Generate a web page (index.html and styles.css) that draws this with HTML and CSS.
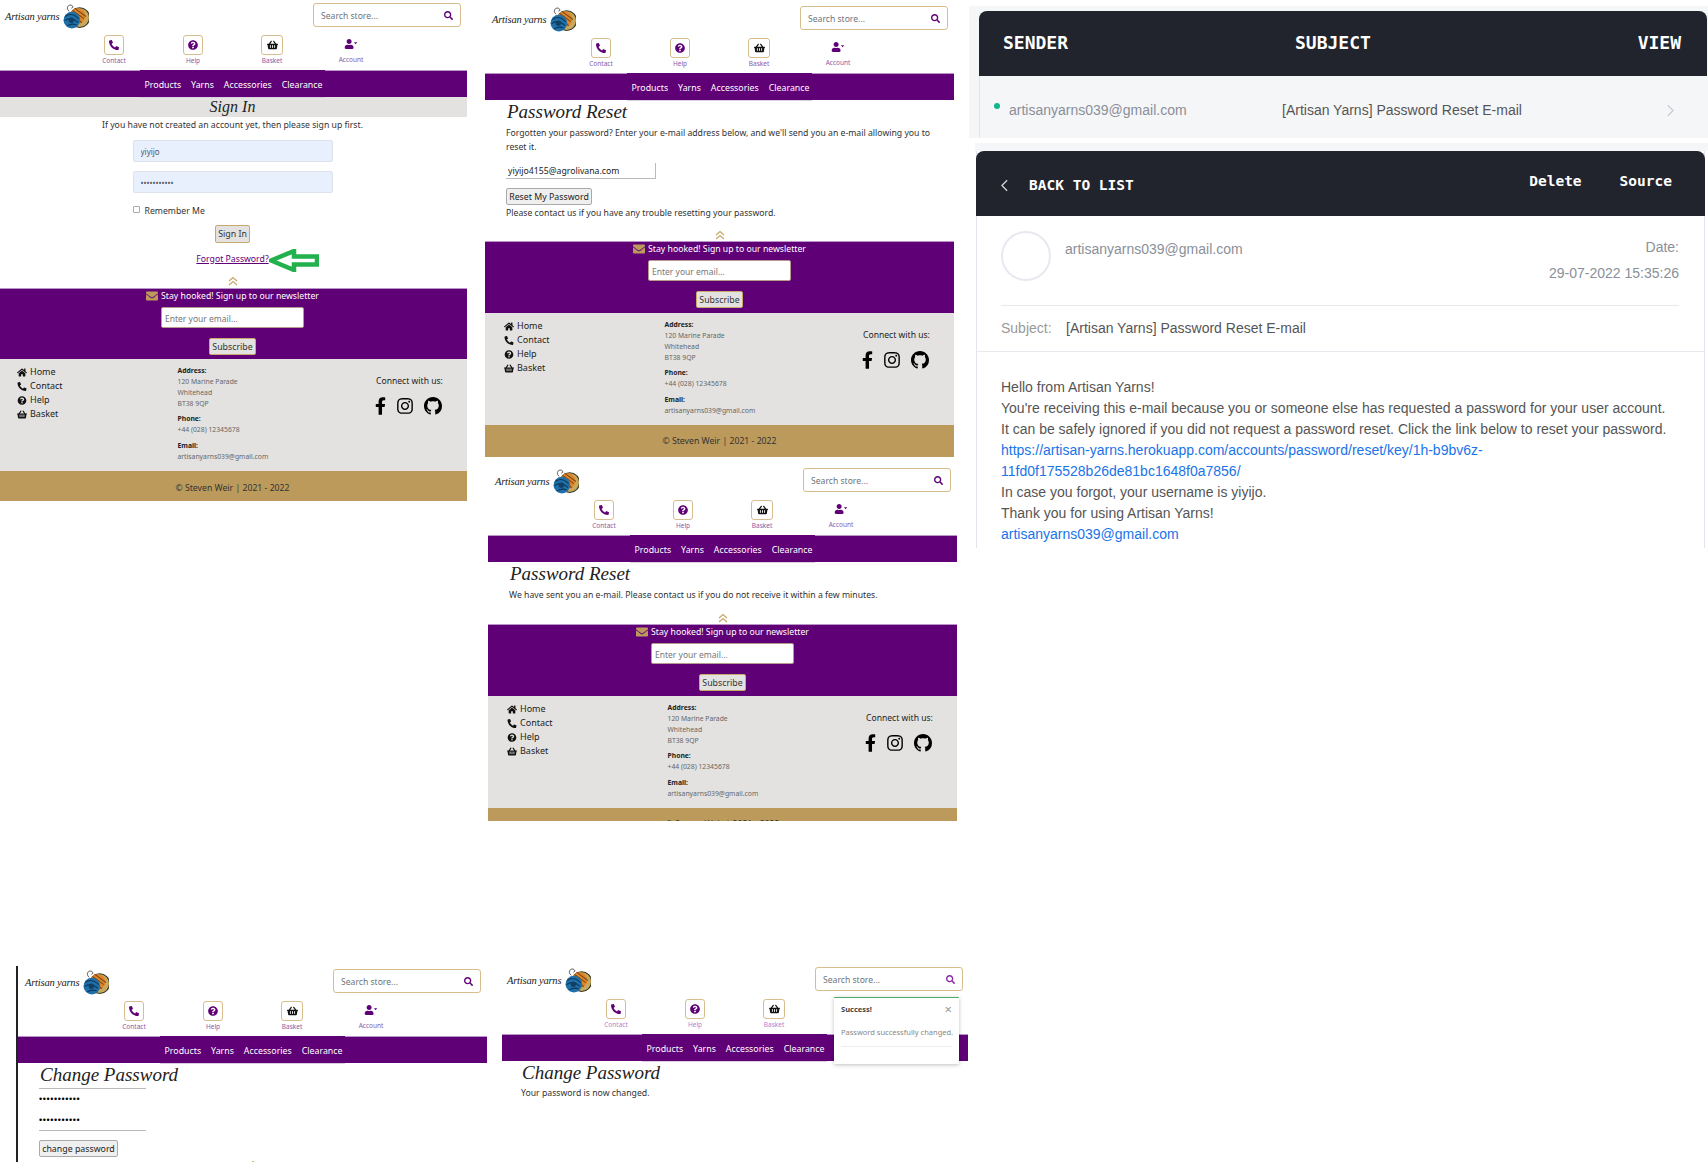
FILE: index.html
```html
<!DOCTYPE html>
<html lang="en">
<head>
    <meta charset="UTF-8">
    <title>Artisan Yarns - password reset flow</title>
    <link rel="stylesheet" href="styles.css">
</head>
<body>
    <svg class="sprites" width="0" height="0">
        <symbol id="i-phone" viewBox="0 0 512 512"><path d="M497.39 361.8l-112-48a24 24 0 0 0-28 6.9l-49.6 60.6A370.66 370.66 0 0 1 130.6 204.11l60.6-49.6a23.94 23.94 0 0 0 6.9-28l-48-112A24.16 24.16 0 0 0 122.6.61l-104 24A24 24 0 0 0 0 48c0 256.5 207.9 464 464 464a24 24 0 0 0 23.4-18.6l24-104a24.29 24.29 0 0 0-14.01-27.6z"/></symbol>
        <symbol id="i-help" viewBox="0 0 512 512"><path d="M504 256c0 136.997-111.043 248-248 248S8 392.997 8 256C8 119.083 119.043 8 256 8s248 111.083 248 248zM262.655 90c-54.497 0-89.255 22.957-116.549 63.758-3.536 5.286-2.353 12.415 2.715 16.258l34.699 26.31c5.205 3.947 12.621 3.008 16.665-2.122 17.864-22.658 30.113-35.797 57.303-35.797 20.429 0 45.698 13.148 45.698 32.958 0 14.976-12.363 22.667-32.534 33.976C247.128 238.528 216 254.941 216 296v4c0 6.627 5.373 12 12 12h56c6.627 0 12-5.373 12-12v-1.333c0-28.462 83.186-29.647 83.186-106.667 0-58.002-60.165-102-116.531-102zM256 338c-25.365 0-46 20.635-46 46 0 25.364 20.635 46 46 46s46-20.636 46-46c0-25.365-20.635-46-46-46z"/></symbol>
        <symbol id="i-basket" viewBox="0 0 576 512"><path d="M576 216v16c0 13.255-10.745 24-24 24h-8l-26.113 182.788C514.509 462.435 494.257 480 470.37 480H105.63c-23.887 0-44.139-17.565-47.518-41.212L32 256h-8c-13.255 0-24-10.745-24-24v-16c0-13.255 10.745-24 24-24h67.341l106.78-146.821c10.395-14.292 30.407-17.453 44.701-7.058 14.293 10.395 17.453 30.408 7.058 44.701L170.477 192h235.046L326.12 82.821c-10.395-14.292-7.234-34.306 7.059-44.701 14.291-10.395 34.306-7.235 44.701 7.058L484.659 192H552c13.255 0 24 10.745 24 24zM312 392V280c0-13.255-10.745-24-24-24s-24 10.745-24 24v112c0 13.255 10.745 24 24 24s24-10.745 24-24zm112 0V280c0-13.255-10.745-24-24-24s-24 10.745-24 24v112c0 13.255 10.745 24 24 24s24-10.745 24-24zm-224 0V280c0-13.255-10.745-24-24-24s-24 10.745-24 24v112c0 13.255 10.745 24 24 24s24-10.745 24-24z"/></symbol>
        <symbol id="i-user" viewBox="0 0 640 512"><path d="M224 256c70.7 0 128-57.3 128-128S294.7 0 224 0 96 57.3 96 128s57.3 128 128 128zm89.6 32h-16.7c-22.2 10.2-46.9 16-72.9 16s-50.6-5.8-72.9-16h-16.7C60.2 288 0 348.2 0 422.4V464c0 26.5 21.5 48 48 48h352c26.5 0 48-21.5 48-48v-41.6c0-74.2-60.2-134.4-134.4-134.4z"/><path d="M470 170h170l-85 100z"/></symbol>
        <symbol id="i-search" viewBox="0 0 512 512"><path d="M505 442.7L405.3 343c-4.5-4.5-10.6-7-17-7H372c27.6-35.3 44-79.7 44-128C416 93.1 322.9 0 208 0S0 93.1 0 208s93.1 208 208 208c48.3 0 92.7-16.4 128-44v16.3c0 6.4 2.5 12.5 7 17l99.7 99.7c9.4 9.4 24.6 9.4 33.9 0l28.3-28.3c9.4-9.4 9.4-24.6.1-34zM208 336c-70.7 0-128-57.2-128-128 0-70.7 57.2-128 128-128 70.7 0 128 57.2 128 128 0 70.7-57.2 128-128 128z"/></symbol>
        <symbol id="i-mail" viewBox="0 0 512 512"><path d="M502.3 190.8c3.9-3.1 9.7-.2 9.7 4.7V400c0 26.5-21.5 48-48 48H48c-26.5 0-48-21.5-48-48V195.6c0-5 5.7-7.8 9.7-4.7 22.4 17.4 52.1 39.5 154.1 113.6 21.1 15.4 56.7 47.8 92.2 47.6 35.7.3 72-32.8 92.3-47.6 102-74.1 131.6-96.3 154-113.7zM256 320c23.2.4 56.6-29.2 73.4-41.4 132.7-96.3 142.8-104.7 173.4-128.7 5.8-4.5 9.2-11.5 9.2-18.9v-19c0-26.5-21.5-48-48-48H48C21.5 64 0 85.5 0 112v19c0 7.4 3.4 14.3 9.2 18.9 30.6 23.9 40.7 32.4 173.4 128.7 16.8 12.2 50.2 41.8 73.4 41.4z"/></symbol>
        <symbol id="i-home" viewBox="0 0 576 512"><path d="M280.37 148.26L96 300.11V464a16 16 0 0 0 16 16l112.06-.29a16 16 0 0 0 15.92-16V368a16 16 0 0 1 16-16h64a16 16 0 0 1 16 16v95.64a16 16 0 0 0 16 16.05L464 480a16 16 0 0 0 16-16V300L295.67 148.26a12.19 12.19 0 0 0-15.3 0zM571.6 251.47L488 182.56V44.05a12 12 0 0 0-12-12h-56a12 12 0 0 0-12 12v72.61L318.47 43a48 48 0 0 0-61 0L4.34 251.47a12 12 0 0 0-1.6 16.9l25.5 31A12 12 0 0 0 45.15 301l235.22-193.74a12.19 12.19 0 0 1 15.3 0L530.9 301a12 12 0 0 0 16.9-1.6l25.5-31a12 12 0 0 0-1.7-16.93z"/></symbol>
        <symbol id="i-fb" viewBox="0 0 320 512"><path d="M279.14 288l14.22-92.66h-88.91v-60.13c0-25.35 12.42-50.06 52.24-50.06h40.42V6.26S260.43 0 225.36 0c-73.22 0-121.08 44.38-121.08 124.72v70.62H22.89V288h81.39v224h100.17V288z"/></symbol>
        <symbol id="i-insta" viewBox="0 0 448 512"><path d="M224.1 141c-63.6 0-114.9 51.3-114.9 114.9s51.3 114.9 114.9 114.9S339 319.5 339 255.9 287.7 141 224.1 141zm0 189.6c-41.1 0-74.7-33.5-74.7-74.7s33.5-74.7 74.7-74.7 74.7 33.5 74.7 74.7-33.6 74.7-74.7 74.7zm146.4-194.3c0 14.9-12 26.8-26.8 26.8-14.9 0-26.8-12-26.8-26.8s12-26.8 26.8-26.8 26.8 12 26.8 26.8zm76.1 27.2c-1.7-35.9-9.9-67.7-36.2-93.9-26.2-26.2-58-34.4-93.9-36.2-37-2.1-147.9-2.1-184.9 0-35.8 1.7-67.6 9.9-93.9 36.1s-34.4 58-36.2 93.9c-2.1 37-2.1 147.9 0 184.9 1.7 35.9 9.9 67.7 36.2 93.9s58 34.4 93.9 36.2c37 2.1 147.9 2.1 184.9 0 35.9-1.7 67.7-9.9 93.9-36.2 26.2-26.2 34.4-58 36.2-93.9 2.1-37 2.1-147.8 0-184.8zM398.8 388c-7.8 19.6-22.9 34.7-42.6 42.6-29.5 11.7-99.5 9-132.1 9s-102.7 2.6-132.1-9c-19.6-7.8-34.7-22.9-42.6-42.6-11.7-29.5-9-99.5-9-132.1s-2.6-102.7 9-132.1c7.8-19.6 22.9-34.7 42.6-42.6 29.5-11.7 99.5-9 132.1-9s102.7-2.6 132.1 9c19.6 7.8 34.7 22.9 42.6 42.6 11.7 29.5 9 99.5 9 132.1s2.7 102.7-9 132.1z"/></symbol>
        <symbol id="i-github" viewBox="0 0 16 16"><path d="M8 0C3.58 0 0 3.58 0 8c0 3.54 2.29 6.53 5.47 7.59.4.07.55-.17.55-.38 0-.19-.01-.82-.01-1.49-2.01.37-2.53-.49-2.69-.94-.09-.23-.48-.94-.82-1.13-.28-.15-.68-.52-.01-.53.63-.01 1.08.58 1.23.82.72 1.21 1.87.87 2.33.66.07-.52.28-.87.51-1.07-1.78-.2-3.64-.89-3.64-3.95 0-.87.31-1.59.82-2.15-.08-.2-.36-1.02.08-2.12 0 0 .67-.21 2.2.82.64-.18 1.32-.27 2-.27.68 0 1.36.09 2 .27 1.53-1.04 2.2-.82 2.2-.82.44 1.1.16 1.92.08 2.12.51.56.82 1.27.82 2.15 0 3.07-1.87 3.75-3.65 3.95.29.25.54.73.54 1.48 0 1.07-.01 1.93-.01 2.2 0 .21.15.46.55.38A8.013 8.013 0 0016 8c0-4.42-3.58-8-8-8z"/></symbol>
        <symbol id="i-yarn" viewBox="0 0 26 24">
            <path d="M7 7C4 5 5 1 8 1s3 3 1 3" fill="none" stroke="#333" stroke-width=".8"/>
            <circle cx="17" cy="13" r="9.5" fill="#c9a85c" stroke="#3a3a2a"/>
            <circle cx="15" cy="11.5" r="7.5" fill="#e0842a"/>
            <path d="M10 6l11 8M12 4l11 8M9 10l10 8" stroke="#7a4a14"/>
            <circle cx="9.5" cy="15.5" r="8" fill="#1f6fa8"/>
            <path d="M3 12c4-3 9-2 13 2M2.500 16c4-3 9-2 13 2M5 21c3-2 6-2 9-1" fill="none" stroke="#0c3a5c"/>
            <circle cx="9" cy="15.5" r="2.500" fill="#123f63"/>
        </symbol>
        <symbol id="i-top" viewBox="0 0 10 10"><path d="M1 5l4-3.500L9 5M1 9l4-3.500L9 9" fill="none" stroke="#c9a86a" stroke-width="1.300"/></symbol>
    </svg>

    <section class="shot shot-signin">
        <div class="page">
            <header class="site-top">
                <a class="logo"><span class="logo-text">Artisan yarns</span><svg class="logo-ball"><use href="#i-yarn"/></svg></a>
                <div class="search"><span class="search-text">Search store...</span><span class="search-btn"><svg class="search-icon"><use href="#i-search"/></svg></span></div>
            </header>
            <div class="icon-row">
                <div class="icon-item"><span class="icon-box"><svg class="icon-glyph"><use href="#i-phone"/></svg></span><span class="icon-label">Contact</span></div>
                <div class="icon-item"><span class="icon-box"><svg class="icon-glyph"><use href="#i-help"/></svg></span><span class="icon-label">Help</span></div>
                <div class="icon-item"><span class="icon-box box-wide"><svg class="icon-glyph glyph-basket"><use href="#i-basket"/></svg></span><span class="icon-label">Basket</span></div>
                <div class="icon-item item-account"><svg class="account-glyph"><use href="#i-user"/></svg><span class="icon-label">Account</span></div>
            </div>
            <nav class="main-nav"><div class="nav-links"><a>Products</a><a>Yarns</a><a>Accessories</a><a>Clearance</a></div></nav>

            <main>
                <h1 class="page-title band-title">Sign In</h1>
                <p class="signin-note">If you have not created an account yet, then please sign up first.</p>
                <form class="signin-form">
                    <input class="filled-input" type="text" value="yiyijo">
                    <input class="filled-input" type="password" value="yiyijo41551">
                    <label class="remember"><input type="checkbox"> Remember Me</label>
                    <div class="signin-actions">
                        <button class="tan-btn" type="button">Sign In</button>
                        <div class="forgot-wrap">
                            <a class="forgot-link">Forgot Password?</a>
                            <svg class="green-arrow" viewBox="0 0 50 23"><path d="M2 11.500L25 2v5.500h23v8H25V21z" fill="#fff" stroke="#22b14c" stroke-width="4.500"/></svg>
                        </div>
                    </div>
                </form>
                <svg class="to-top"><use href="#i-top"/></svg>
            </main>

            <footer class="site-foot">
                <div class="news">
                    <div class="news-title"><svg class="news-icon"><use href="#i-mail"/></svg>Stay hooked! Sign up to our newsletter</div>
                    <input class="news-input" type="text" placeholder="Enter your email...">
                    <button class="tan-btn news-btn" type="button">Subscribe</button>
                </div>
                <div class="info">
                    <ul class="foot-links">
                        <li><svg class="foot-icon"><use href="#i-home"/></svg>Home</li>
                        <li><svg class="foot-icon"><use href="#i-phone"/></svg>Contact</li>
                        <li><svg class="foot-icon"><use href="#i-help"/></svg>Help</li>
                        <li><svg class="foot-icon"><use href="#i-basket"/></svg>Basket</li>
                    </ul>
                    <div class="contact">
                        <strong>Address:</strong><span>120 Marine Parade</span><span>Whitehead</span><span>BT38 9QP</span>
                        <strong>Phone:</strong><span>+44 (028) 12345678</span>
                        <strong>Email:</strong><span>artisanyarns039@gmail.com</span>
                    </div>
                    <div class="social">
                        <div class="social-title">Connect with us:</div>
                        <div class="social-icons"><svg class="soc-fb"><use href="#i-fb"/></svg><svg class="soc-insta"><use href="#i-insta"/></svg><svg class="soc-gh"><use href="#i-github"/></svg></div>
                    </div>
                </div>
                <div class="copy">© Steven Weir | 2021 - 2022</div>
            </footer>
        </div>
    </section>

    <section class="shot shot-reset">
        <div class="page">
            <header class="site-top">
                <a class="logo"><span class="logo-text">Artisan yarns</span><svg class="logo-ball"><use href="#i-yarn"/></svg></a>
                <div class="search"><span class="search-text">Search store...</span><span class="search-btn"><svg class="search-icon"><use href="#i-search"/></svg></span></div>
            </header>
            <div class="icon-row">
                <div class="icon-item"><span class="icon-box"><svg class="icon-glyph"><use href="#i-phone"/></svg></span><span class="icon-label">Contact</span></div>
                <div class="icon-item"><span class="icon-box"><svg class="icon-glyph"><use href="#i-help"/></svg></span><span class="icon-label">Help</span></div>
                <div class="icon-item"><span class="icon-box box-wide"><svg class="icon-glyph glyph-basket"><use href="#i-basket"/></svg></span><span class="icon-label">Basket</span></div>
                <div class="icon-item item-account"><svg class="account-glyph"><use href="#i-user"/></svg><span class="icon-label">Account</span></div>
            </div>
            <nav class="main-nav"><div class="nav-links"><a>Products</a><a>Yarns</a><a>Accessories</a><a>Clearance</a></div></nav>

            <main class="plain-main main-reset">
                <h1 class="page-title">Password Reset</h1>
                <p class="plain-text reset-intro">Forgotten your password? Enter your e-mail address below, and we'll send you an e-mail allowing you to reset it.</p>
                <input class="reset-input" type="text" value="yiyijo4155@agrolivana.com">
                <button class="grey-btn reset-btn" type="button">Reset My Password</button>
                <p class="plain-text reset-help">Please contact us if you have any trouble resetting your password.</p>
                <svg class="to-top"><use href="#i-top"/></svg>
            </main>

            <footer class="site-foot">
                <div class="news">
                    <div class="news-title"><svg class="news-icon"><use href="#i-mail"/></svg>Stay hooked! Sign up to our newsletter</div>
                    <input class="news-input" type="text" placeholder="Enter your email...">
                    <button class="tan-btn news-btn" type="button">Subscribe</button>
                </div>
                <div class="info">
                    <ul class="foot-links">
                        <li><svg class="foot-icon"><use href="#i-home"/></svg>Home</li>
                        <li><svg class="foot-icon"><use href="#i-phone"/></svg>Contact</li>
                        <li><svg class="foot-icon"><use href="#i-help"/></svg>Help</li>
                        <li><svg class="foot-icon"><use href="#i-basket"/></svg>Basket</li>
                    </ul>
                    <div class="contact">
                        <strong>Address:</strong><span>120 Marine Parade</span><span>Whitehead</span><span>BT38 9QP</span>
                        <strong>Phone:</strong><span>+44 (028) 12345678</span>
                        <strong>Email:</strong><span>artisanyarns039@gmail.com</span>
                    </div>
                    <div class="social">
                        <div class="social-title">Connect with us:</div>
                        <div class="social-icons"><svg class="soc-fb"><use href="#i-fb"/></svg><svg class="soc-insta"><use href="#i-insta"/></svg><svg class="soc-gh"><use href="#i-github"/></svg></div>
                    </div>
                </div>
                <div class="copy">© Steven Weir | 2021 - 2022</div>
            </footer>
        </div>
    </section>

    <section class="shot shot-sent">
        <div class="page">
            <header class="site-top">
                <a class="logo"><span class="logo-text">Artisan yarns</span><svg class="logo-ball"><use href="#i-yarn"/></svg></a>
                <div class="search"><span class="search-text">Search store...</span><span class="search-btn"><svg class="search-icon"><use href="#i-search"/></svg></span></div>
            </header>
            <div class="icon-row">
                <div class="icon-item"><span class="icon-box"><svg class="icon-glyph"><use href="#i-phone"/></svg></span><span class="icon-label">Contact</span></div>
                <div class="icon-item"><span class="icon-box"><svg class="icon-glyph"><use href="#i-help"/></svg></span><span class="icon-label">Help</span></div>
                <div class="icon-item"><span class="icon-box box-wide"><svg class="icon-glyph glyph-basket"><use href="#i-basket"/></svg></span><span class="icon-label">Basket</span></div>
                <div class="icon-item item-account"><svg class="account-glyph"><use href="#i-user"/></svg><span class="icon-label">Account</span></div>
            </div>
            <nav class="main-nav"><div class="nav-links"><a>Products</a><a>Yarns</a><a>Accessories</a><a>Clearance</a></div></nav>

            <main class="plain-main main-sent">
                <h1 class="page-title">Password Reset</h1>
                <p class="plain-text sent-text">We have sent you an e-mail. Please contact us if you do not receive it within a few minutes.</p>
                <svg class="to-top"><use href="#i-top"/></svg>
            </main>

            <footer class="site-foot">
                <div class="news">
                    <div class="news-title"><svg class="news-icon"><use href="#i-mail"/></svg>Stay hooked! Sign up to our newsletter</div>
                    <input class="news-input" type="text" placeholder="Enter your email...">
                    <button class="tan-btn news-btn" type="button">Subscribe</button>
                </div>
                <div class="info">
                    <ul class="foot-links">
                        <li><svg class="foot-icon"><use href="#i-home"/></svg>Home</li>
                        <li><svg class="foot-icon"><use href="#i-phone"/></svg>Contact</li>
                        <li><svg class="foot-icon"><use href="#i-help"/></svg>Help</li>
                        <li><svg class="foot-icon"><use href="#i-basket"/></svg>Basket</li>
                    </ul>
                    <div class="contact">
                        <strong>Address:</strong><span>120 Marine Parade</span><span>Whitehead</span><span>BT38 9QP</span>
                        <strong>Phone:</strong><span>+44 (028) 12345678</span>
                        <strong>Email:</strong><span>artisanyarns039@gmail.com</span>
                    </div>
                    <div class="social">
                        <div class="social-title">Connect with us:</div>
                        <div class="social-icons"><svg class="soc-fb"><use href="#i-fb"/></svg><svg class="soc-insta"><use href="#i-insta"/></svg><svg class="soc-gh"><use href="#i-github"/></svg></div>
                    </div>
                </div>
                <div class="copy">© Steven Weir | 2021 - 2022</div>
            </footer>
        </div>
    </section>

    <section class="shot shot-change">
        <div class="page">
            <header class="site-top">
                <a class="logo"><span class="logo-text">Artisan yarns</span><svg class="logo-ball"><use href="#i-yarn"/></svg></a>
                <div class="search"><span class="search-text">Search store...</span><span class="search-btn"><svg class="search-icon"><use href="#i-search"/></svg></span></div>
            </header>
            <div class="icon-row">
                <div class="icon-item"><span class="icon-box"><svg class="icon-glyph"><use href="#i-phone"/></svg></span><span class="icon-label">Contact</span></div>
                <div class="icon-item"><span class="icon-box"><svg class="icon-glyph"><use href="#i-help"/></svg></span><span class="icon-label">Help</span></div>
                <div class="icon-item"><span class="icon-box box-wide"><svg class="icon-glyph glyph-basket"><use href="#i-basket"/></svg></span><span class="icon-label">Basket</span></div>
                <div class="icon-item item-account"><svg class="account-glyph"><use href="#i-user"/></svg><span class="icon-label">Account</span></div>
            </div>
            <nav class="main-nav"><div class="nav-links"><a>Products</a><a>Yarns</a><a>Accessories</a><a>Clearance</a></div></nav>

            <main class="plain-main main-change">
                <h1 class="page-title">Change Password</h1>
                <div class="pw-fields">
                    <input class="pw-field" type="password" value="yiyijo41551">
                    <input class="pw-field pw-last" type="password" value="yiyijo41551">
                </div>
                <button class="grey-btn change-btn" type="button">change password</button>
                <svg class="to-top"><use href="#i-top"/></svg>
            </main>
        </div>
    </section>

    <section class="shot shot-done">
        <div class="page">
            <header class="site-top">
                <a class="logo"><span class="logo-text">Artisan yarns</span><svg class="logo-ball"><use href="#i-yarn"/></svg></a>
                <div class="search"><span class="search-text">Search store...</span><span class="search-btn"><svg class="search-icon"><use href="#i-search"/></svg></span></div>
            </header>
            <div class="icon-row">
                <div class="icon-item"><span class="icon-box"><svg class="icon-glyph"><use href="#i-phone"/></svg></span><span class="icon-label">Contact</span></div>
                <div class="icon-item"><span class="icon-box"><svg class="icon-glyph"><use href="#i-help"/></svg></span><span class="icon-label">Help</span></div>
                <div class="icon-item"><span class="icon-box box-wide"><svg class="icon-glyph glyph-basket"><use href="#i-basket"/></svg></span><span class="icon-label">Basket</span></div>
                <div class="icon-item item-account"><svg class="account-glyph"><use href="#i-user"/></svg><span class="icon-label">Account</span></div>
            </div>
            <nav class="main-nav"><div class="nav-links"><a>Products</a><a>Yarns</a><a>Accessories</a><a>Clearance</a></div></nav>

            <main class="plain-main main-done">
                <h1 class="page-title">Change Password</h1>
                <p class="plain-text done-text">Your password is now changed.</p>
            </main>
        </div>
        <div class="toast">
            <div class="toast-head"><strong>Success!</strong><span class="toast-close">×</span></div>
            <p class="toast-msg">Password successfully changed.</p>
            <hr class="toast-line">
        </div>
    </section>

    <section class="mail-list">
        <div class="list-head"><span>SENDER</span><span>SUBJECT</span><span>VIEW</span></div>
        <div class="list-row">
            <span class="list-sender"><i class="unread-dot"></i>artisanyarns039@gmail.com</span>
            <span class="list-subject">[Artisan Yarns] Password Reset E-mail</span>
            <svg class="row-chevron" viewBox="0 0 8 14"><path d="M1 1l6 6-6 6" fill="none" stroke="#c9ccd2" stroke-width="1.500"/></svg>
        </div>
    </section>

    <section class="mail-detail">
        <div class="mail-strip"></div>
        <div class="mail-card">
            <div class="detail-head">
                <div class="back-link">
                    <svg class="back-chevron" viewBox="0 0 8 14"><path d="M7 1L1 7l6 6" fill="none" stroke="#d5d7db" stroke-width="1.500"/></svg>
                    <span>BACK TO LIST</span>
                </div>
                <div class="detail-actions"><span>Delete</span><span>Source</span></div>
            </div>
            <div class="meta">
                <div class="avatar"></div>
                <div class="meta-from">artisanyarns039@gmail.com</div>
                <div class="meta-date"><div>Date:</div><div>29-07-2022 15:35:26</div></div>
            </div>
            <div class="mail-subject"><span class="subject-label">Subject:</span><span>[Artisan Yarns] Password Reset E-mail</span></div>
            <div class="mail-body">
                <div>Hello from Artisan Yarns!</div>
                <div>You're receiving this e-mail because you or someone else has requested a password for your user account.</div>
                <div>It can be safely ignored if you did not request a password reset. Click the link below to reset your password.</div>
                <a>https://artisan-yarns.herokuapp.com/accounts/password/reset/key/1h-b9bv6z-<br>11fd0f175528b26de81bc1648f0a7856/</a>
                <div>In case you forgot, your username is yiyijo.</div>
                <div>Thank you for using Artisan Yarns!</div>
                <a>artisanyarns039@gmail.com</a>
            </div>
        </div>
    </section>
</body>
</html>
```

FILE: styles.css
```css
* {
    margin: 0;
    padding: 0;
    box-sizing: border-box;
}

body {
    position: relative;
    width: 1708px;
    height: 1169px;
    overflow: hidden;
    background: #fff;
    font-family: "Noto Sans", sans-serif;
    color: #333;
}

.sprites {
    position: absolute;
}

/* each screenshot sits on the free canvas at its own place */
.shot {
    position: absolute;
    overflow: hidden;
}

.shot-signin { left: 0; top: 0; width: 467px; height: 502px; }
.shot-reset { left: 485px; top: 3px; width: 469px; height: 454px; }
.shot-sent { left: 488px; top: 465px; width: 469px; height: 356px; }
.shot-change { left: 16px; top: 966px; width: 471px; height: 196px; border-left: 2px solid #222; }
.shot-done { left: 502px; top: 964px; width: 466px; height: 140px; }

.page {
    width: 469px;
}

.shot-signin .page,
.shot-done .page {
    margin-left: -2px;
}

/* site header */
.site-top {
    display: flex;
    justify-content: space-between;
    align-items: flex-start;
    height: 35px;
    padding: 3px 6px 0 7px;
}

.logo {
    display: flex;
    align-items: center;
    gap: 4px;
    height: 26px;
}

.logo-text {
    width: 53px;
    font-family: "Liberation Serif", serif;
    font-style: italic;
    font-size: 10.500px;
    letter-spacing: -.2px;
    color: #222;
    white-space: nowrap;
}

.logo-ball {
    width: 27px;
    height: 25px;
}

.search {
    display: flex;
    align-items: center;
    justify-content: space-between;
    width: 148px;
    height: 24px;
    border: 1px solid #d8bd8e;
    border-radius: 3px;
    background: #fff;
}

.search-text {
    padding: 1px 0 0 7px;
    font-size: 8.600px;
    color: #6c757d;
}

.search-btn {
    display: flex;
    align-items: center;
    justify-content: center;
    width: 24px;
    height: 22px;
}

.search-icon {
    width: 9px;
    height: 9px;
    fill: #5f0077;
}

.icon-row {
    display: flex;
    justify-content: center;
    height: 35px;
}

.icon-item {
    display: flex;
    flex-direction: column;
    align-items: center;
    width: 79px;
}

.icon-box {
    display: flex;
    align-items: center;
    justify-content: center;
    width: 20px;
    height: 20px;
    border: 1px solid #d8bd8e;
    border-radius: 3px;
}

.box-wide {
    width: 22px;
}

.icon-glyph {
    width: 10px;
    height: 10px;
    fill: #5f0077;
}

.glyph-basket {
    width: 11px;
    fill: #111;
}

.icon-label {
    margin-top: 1px;
    font-size: 6.500px;
    line-height: 9px;
    color: #8a5aa5;
}

.item-account {
    padding-top: 4px;
}

.account-glyph {
    width: 14px;
    height: 10px;
    margin-bottom: 5px;
    fill: #5f0077;
}

.main-nav {
    display: flex;
    justify-content: center;
    height: 27px;
    border-top: 1px solid #b995c8;
    background: #5f0077;
}

.nav-links {
    display: flex;
    justify-content: center;
    gap: 10px;
    height: 28px;
    margin: -1px 0;
    width: 185px;
    padding-left: 2px;
    border-top: 1px solid #5f0077;
    border-bottom: 1px solid #dccfe2;
    background: #5f0077;
    font-size: 8.800px;
    line-height: 28px;
    color: #fff;
    white-space: nowrap;
}

/* page bodies */
.page-title {
    font-family: "Liberation Serif", serif;
    font-style: italic;
    font-weight: 400;
    font-size: 19px;
    line-height: 24px;
    color: #222;
}

.band-title {
    height: 20px;
    font-size: 16px;
    line-height: 20px;
    background: #e3e2e0;
    text-align: center;
}

.signin-note {
    font-size: 8.700px;
    line-height: 16px;
    text-align: center;
}

.signin-form {
    width: 200px;
    margin: 7px auto 0;
}

.filled-input {
    display: block;
    width: 200px;
    height: 22px;
    margin-bottom: 9px;
    padding-left: 7px;
    border: 1px solid #dde3ec;
    border-radius: 2px;
    background: #e8f0fe;
    font-family: inherit;
    font-size: 8px;
    color: #555;
}

.remember {
    display: flex;
    align-items: center;
    gap: 5px;
    height: 13px;
    margin-top: 11px;
    font-size: 8.700px;
}

.remember input {
    appearance: none;
    width: 7px;
    height: 7px;
    margin-top: -3px;
    border: 1px solid #aaa;
    border-radius: 1px;
    background: #fff;
}

.signin-actions {
    display: flex;
    flex-direction: column;
    align-items: center;
    margin-top: 8px;
}

.tan-btn {
    height: 18px;
    width: 35px;
    padding: 0;
    border: 1px solid #c9a96e;
    border-radius: 2px;
    background: #e3e2e0;
    font-family: inherit;
    font-size: 8.800px;
    color: #333;
}

.forgot-wrap {
    position: relative;
    margin-top: 9px;
    font-size: 8.700px;
    line-height: 14px;
}

.forgot-link {
    color: #5f0077;
    text-decoration: underline;
}

.green-arrow {
    position: absolute;
    left: 100%;
    top: -3px;
    width: 50px;
    height: 23px;
}

.to-top {
    display: block;
    width: 10px;
    height: 10px;
    margin: 10px auto 2px;
}

.plain-main {
    padding-left: 21px;
}

.plain-main .page-title {
    padding-left: 1px;
}

.plain-main .to-top {
    position: relative;
    left: -10px;
}

.plain-text {
    font-size: 8.700px;
    line-height: 14px;
}

.main-reset .reset-intro {
    margin-top: 2px;
    padding-right: 20px;
}

.reset-input {
    display: block;
    width: 150px;
    height: 16px;
    margin-top: 9px;
    padding-left: 2px;
    border: 0;
    border-right: 1px solid #bbb;
    border-bottom: 1px solid #bbb;
    font-family: inherit;
    font-size: 8.700px;
    color: #222;
}

.grey-btn {
    display: block;
    height: 17px;
    padding: 0;
    border: 1px solid #aaa;
    border-radius: 2px;
    background: #efefef;
    font-family: inherit;
    font-size: 8.800px;
    color: #222;
    white-space: nowrap;
}

.reset-btn {
    width: 86px;
    margin-top: 9px;
}

.reset-help {
    margin-top: 1px;
}

.sent-text {
    margin-top: 2px;
}

.main-sent .to-top {
    margin-top: 11px;
    margin-bottom: 1px;
}

.main-reset .to-top {
    margin-bottom: 1px;
}

.pw-fields {
    width: 107px;
    margin-top: 1px;
    border-top: 1px solid #bbb;
    border-bottom: 1px solid #bbb;
}

.pw-field {
    display: block;
    width: 107px;
    height: 20px;
    border: 0;
    font-size: 9px;
    letter-spacing: .6px;
    color: #000;
    outline: 0;
}

.pw-last {
    margin-top: 1px;
}

.change-btn {
    width: 79px;
    margin-top: 9px;
}

.main-change .to-top {
    margin-top: 3px;
}

.done-text {
    margin-top: 1px;
}

.shot-done .icon-label {
    color: #b27fcd;
}

.shot-done .search-icon {
    fill: #8b2ba6;
}

/* toast over the last screenshot */
.toast {
    position: absolute;
    left: 332px;
    top: 33px;
    width: 125px;
    height: 67px;
    padding: 5px 7px;
    border-top: 1px solid #4fae6a;
    background: #fff;
    box-shadow: 0 1px 4px rgba(0,0,0,0.25);
}

.toast-head {
    display: flex;
    justify-content: space-between;
    align-items: center;
    font-size: 7.500px;
    line-height: 12px;
    color: #444;
}

.toast-close {
    font-size: 13px;
    color: #999;
}

.toast-msg {
    margin-top: 11px;
    font-size: 7.500px;
    line-height: 12px;
    white-space: nowrap;
    color: #888;
}

.toast-line {
    margin-top: 8px;
    border: 0;
    border-top: 1px solid #eee;
}

/* site footer */
.news {
    display: flex;
    flex-direction: column;
    align-items: center;
    height: 71px;
    border-top: 1px solid #b995c8;
    background: #5f0077;
}

.shot-reset .news,
.shot-sent .news {
    height: 72px;
}

.news-title {
    display: flex;
    align-items: center;
    font-size: 8.700px;
    line-height: 14px;
    color: #fff;
}

.news-icon {
    width: 12px;
    height: 12px;
    margin-right: 3px;
    fill: #bc9a5c;
}

.news-input {
    width: 143px;
    height: 21px;
    margin-top: 4px;
    padding: 1px 0 0 3px;
    border: 1px solid #b79a8c;
    border-radius: 2px;
    font-family: inherit;
    font-size: 8.500px;
}

.news-input::placeholder {
    color: #777;
}

.news-btn {
    width: 47px;
    height: 17px;
    margin-top: 10px;
}

.info {
    display: grid;
    grid-template-columns: 160.500px 198.500px 1fr;
    height: 112px;
    padding-left: 19px;
    background: #e3e2e0;
}

.foot-links {
    padding-top: 6px;
    list-style: none;
    font-size: 9px;
    line-height: 14px;
    color: #222;
}

.foot-links li {
    display: flex;
    align-items: center;
    gap: 3px;
}

.foot-icon {
    width: 10px;
    height: 9px;
    fill: #111;
}

.contact {
    display: flex;
    flex-direction: column;
    padding-top: 6px;
    font-size: 6.800px;
    line-height: 11px;
    color: #666;
}

.contact strong {
    color: #222;
}

.contact strong:not(:first-child) {
    margin-top: 4px;
}

.contact strong:nth-of-type(3) {
    margin-top: 5px;
}

.social {
    padding-top: 15px;
}

.social-title {
    font-size: 8.600px;
    line-height: 14px;
    white-space: nowrap;
    color: #222;
}

.social-icons {
    display: flex;
    align-items: center;
    gap: 11px;
    margin-top: 9px;
    margin-left: -1px;
}

.soc-fb { width: 11px; height: 18px; fill: #000; }
.soc-insta { width: 16px; height: 18px; fill: #000; }
.soc-gh { width: 18px; height: 18px; fill: #000; }

.copy {
    height: 30px;
    padding-top: 2px;
    background: #bc9a5c;
    font-size: 8.700px;
    line-height: 30px;
    text-align: center;
    color: #333;
}

.shot-reset .copy,
.shot-sent .copy {
    height: 32px;
    padding-top: 0;
    line-height: 32px;
}

/* mail panels */
.mail-list,
.mail-detail {
    font-family: "Liberation Sans", sans-serif;
    font-size: 14px;
}

.mail-list {
    position: absolute;
    left: 969px;
    top: 6px;
    width: 739px;
    height: 132px;
    padding: 5px 1px 0 10px;
    background: #f5f6f8;
}

.list-head {
    display: grid;
    grid-template-columns: 292px 1fr auto;
    align-items: center;
    height: 65px;
    padding: 0 26px 2px 24px;
    border-radius: 8px 8px 0 0;
    background: #21242c;
    font-family: "DejaVu Sans Mono", monospace;
    font-size: 18px;
    font-weight: 700;
    color: #fff;
}

.list-row {
    display: grid;
    grid-template-columns: 288px 1fr auto;
    align-items: center;
    height: 62px;
    padding: 6px 33px 0 14px;
    border-left: 1px solid #e3e5ea;
}

.list-sender {
    display: flex;
    color: #8a8f99;
}

.unread-dot {
    width: 6px;
    height: 6px;
    margin: 1px 9px 0 0;
    border-radius: 50%;
    background: #13b58c;
}

.list-subject {
    color: #555;
}

.row-chevron {
    width: 7px;
    height: 13px;
}

.mail-detail {
    position: absolute;
    left: 975px;
    top: 143px;
    width: 733px;
    height: 405px;
}

.mail-strip {
    height: 8px;
    background: #f5f6f8;
}

.mail-card {
    width: 729px;
    height: 397px;
    margin-left: 1px;
    border-left: 1px solid #e3e5ee;
    border-right: 1px solid #e3e5ee;
}

.detail-head {
    display: flex;
    justify-content: space-between;
    height: 65px;
    margin: 0 -1px;
    padding: 0 33px 0 25px;
    border-radius: 8px 8px 0 0;
    background: #21242c;
    font-family: "DejaVu Sans Mono", monospace;
    font-weight: 700;
    font-size: 14.500px;
    color: #fff;
}

.back-link {
    display: flex;
    align-items: center;
    gap: 21px;
    padding-top: 3px;
}

.back-chevron {
    width: 7px;
    height: 13px;
}

.detail-actions {
    display: flex;
    gap: 38px;
    padding-top: 22px;
    line-height: 17px;
}

.meta {
    display: flex;
    height: 90px;
    margin: 0 25px 0 24px;
    padding-top: 15px;
    border-bottom: 1px solid #e8e9ee;
}

.avatar {
    width: 50px;
    height: 50px;
    border: 2px solid #e8e8f0;
    border-radius: 50%;
}

.meta-from {
    flex: 1;
    margin: 8px 0 0 14px;
    line-height: 20px;
    color: #8a8f99;
}

.meta-date {
    display: flex;
    flex-direction: column;
    gap: 6px;
    padding-top: 6px;
    line-height: 20px;
    text-align: right;
    color: #8a8f99;
}

.mail-subject {
    display: flex;
    height: 46px;
    padding: 12px 0 0 24px;
    border-bottom: 1px solid #e8e9ee;
    line-height: 20px;
    color: #555;
}

.subject-label {
    width: 65px;
    color: #999;
}

.mail-body {
    padding: 25px 0 0 24px;
    line-height: 21px;
    color: #555;
    white-space: nowrap;
}

.mail-body a {
    display: block;
    color: #1a73e8;
}
```
